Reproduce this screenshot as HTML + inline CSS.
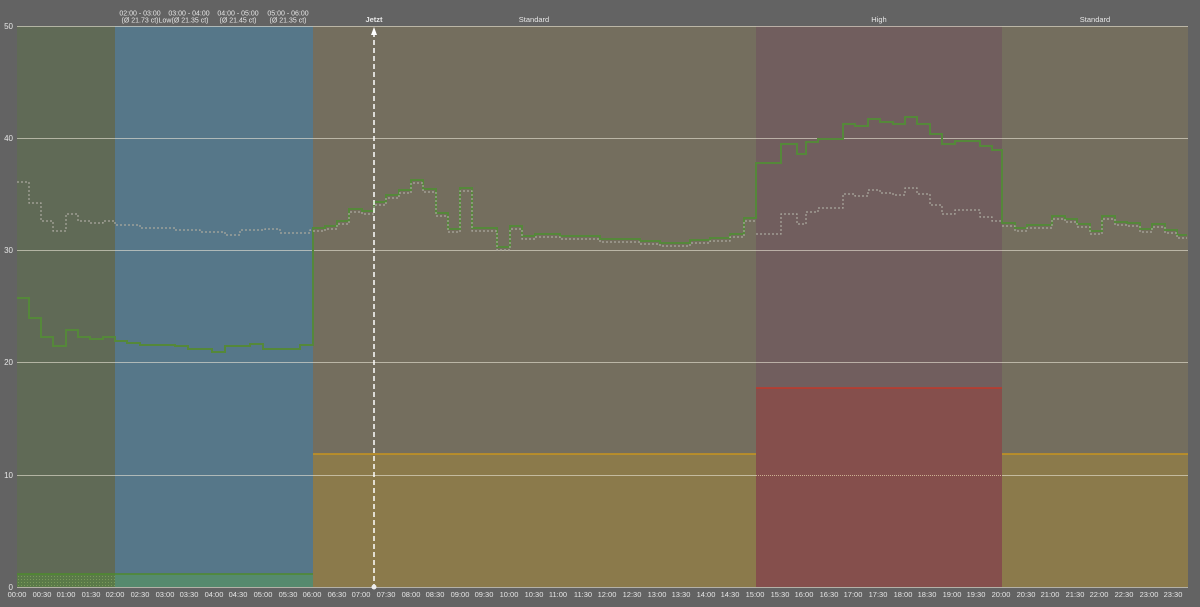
<!DOCTYPE html>
<html><head><meta charset="utf-8"><style>
html,body{margin:0;padding:0;background:#636363;width:1200px;height:607px;overflow:hidden}
svg{display:block;font-family:"Liberation Sans",sans-serif}
</style></head><body>
<svg width="1200" height="607" viewBox="0 0 1200 607">
<defs>
<clipPath id="c1"><rect x="313" y="0" width="443" height="607"/><rect x="1002" y="0" width="186" height="607"/></clipPath>
<pattern id="dots" width="3" height="3" patternUnits="userSpaceOnUse"><rect width="3" height="3" fill="#5a7a48"/><rect width="1" height="1" fill="#7a9a5a"/></pattern>
</defs>
<rect x="17" y="26" width="98" height="561" fill="#606a56"/>
<rect x="115" y="26" width="198" height="561" fill="#567789"/>
<rect x="313" y="26" width="443" height="561" fill="#746e5e"/>
<rect x="756" y="26" width="246" height="561" fill="#715e5e"/>
<rect x="1002" y="26" width="186" height="561" fill="#746e5e"/>
<rect x="17" y="574" width="98" height="13" fill="url(#dots)"/>
<rect x="115" y="574" width="198" height="13" fill="#568a6e"/>
<line x1="17" y1="574" x2="313" y2="574" stroke="#4e8a2e" stroke-width="1.5"/>
<rect x="313" y="454" width="443" height="133" fill="#8b7a4b"/>
<rect x="1002" y="454" width="186" height="133" fill="#8b7a4b"/>
<line x1="313" y1="454" x2="756" y2="454" stroke="#c8941e" stroke-width="1.5"/>
<line x1="1002" y1="454" x2="1188" y2="454" stroke="#c8941e" stroke-width="1.5"/>
<rect x="756" y="388" width="246" height="199" fill="#854f4c"/>
<line x1="756" y1="388" x2="1002" y2="388" stroke="#c0392b" stroke-width="1.5"/>
<g stroke="rgba(235,230,215,0.6)" stroke-width="1">
<line x1="17" y1="26.5" x2="1188" y2="26.5"/><line x1="17" y1="138.5" x2="1188" y2="138.5"/>
<line x1="17" y1="250.5" x2="1188" y2="250.5"/><line x1="17" y1="362.5" x2="1188" y2="362.5"/>
<line x1="17" y1="475.5" x2="756" y2="475.5"/><line x1="1002" y1="475.5" x2="1188" y2="475.5"/>
<line x1="17" y1="587.5" x2="1188" y2="587.5"/>
</g>
<line x1="756" y1="475.5" x2="1002" y2="475.5" stroke="rgba(235,220,180,0.7)" stroke-dasharray="1,1"/>
<path d="M17 298 H29 V318 H41 V337 H53 V346 H66 V330 H78 V337 H90 V339 H103 V337 H115 V341 H127 V343 H140 V345 H175 V346 H188 V349 H212 V352 H225 V346 H250 V344 H263 V349 H300 V345 H313 V228 H325 V226 H337 V221 H349 V209 H362 V211 H374 V202 H386 V195 H399 V190 H411 V180 H423 V189 H436 V213 H448 V229 H460 V188 H472 V228 H497 V247 H510 V226 H522 V236 H535 V234 H560 V236 H600 V239 H640 V241 H660 V243 H690 V240 H710 V238 H730 V234 H744 V218 H756 V163 H781 V144 H797 V154 H806 V142 H818 V139 H843 V124 H855 V126 H868 V119 H880 V122 H893 V124 H905 V117 H917 V124 H930 V134 H942 V144 H955 V141 H980 V146 H992 V150 H1002 V223 H1015 V228 H1027 V225 H1052 V216 H1065 V219 H1077 V224 H1090 V231 H1102 V216 H1115 V222 H1127 V223 H1140 V229 H1152 V224 H1165 V230 H1177 V235 H1187" fill="none" stroke="#55883a" stroke-width="2"/>
<g clip-path="url(#c1)"><path transform="translate(0,3)" d="M313 228 H325 V226 H337 V221 H349 V209 H362 V211 H374 V202 H386 V195 H399 V190 H411 V180 H423 V189 H436 V213 H448 V229 H460 V188 H472 V228 H497 V247 H510 V226 H522 V236 H535 V234 H560 V236 H600 V239 H640 V241 H660 V243 H690 V240 H710 V238 H730 V234 H744 V218 H756 M1002 223 H1015 V228 H1027 V225 H1052 V216 H1065 V219 H1077 V224 H1090 V231 H1102 V216 H1115 V222 H1127 V223 H1140 V229 H1152 V224 H1165 V230 H1177 V235 H1187" fill="none" stroke="#aaa89e" stroke-width="1.2" stroke-dasharray="2,2"/></g>
<path d="M17 182 H29 V203 H41 V221 H53 V231 H66 V214 H78 V221 H90 V223 H103 V221 H115 V225 H140 V228 H175 V230 H200 V232 H225 V235 H240 V230 H265 V229 H280 V233 H310 V230 H313 M756 234 H781 V214 H797 V224 H806 V212 H818 V208 H843 V194 H855 V196 H868 V190 H880 V193 H893 V195 H905 V188 H917 V194 H930 V205 H942 V214 H955 V210 H980 V217 H992 V221 H1002" fill="none" stroke="#aaa89e" stroke-width="1.2" stroke-dasharray="2,2"/>
<line x1="374" y1="32" x2="374" y2="587" stroke="#fff" stroke-width="1.5" stroke-dasharray="5,3"/>
<path d="M371 35 L374 27 L377 35 Z" fill="#fff"/>
<circle cx="374" cy="587" r="2.5" fill="#eee"/>
<g fill="#e6e6e6" font-size="8">
<text x="13" y="29" text-anchor="end">50</text><text x="13" y="141" text-anchor="end">40</text>
<text x="13" y="253" text-anchor="end">30</text><text x="13" y="365" text-anchor="end">20</text>
<text x="13" y="478" text-anchor="end">10</text><text x="13" y="590" text-anchor="end">0</text>
<g text-anchor="middle" font-size="7">
<text x="140" y="15.5">02:00 - 03:00</text><text x="140" y="22.5">(Ø 21.73 ct)</text>
<text x="165" y="22.5">Low</text>
<text x="189" y="15.5">03:00 - 04:00</text><text x="190" y="22.5">(Ø 21.35 ct)</text>
<text x="238" y="15.5">04:00 - 05:00</text><text x="238" y="22.5">(Ø 21.45 ct)</text>
<text x="288" y="15.5">05:00 - 06:00</text><text x="288" y="22.5">(Ø 21.35 ct)</text>
</g>
<g text-anchor="middle">
<text x="374" y="22" font-weight="bold" font-size="7.5">Jetzt</text>
<text x="534" y="22" font-size="7.5">Standard</text><text x="879" y="22" font-size="7.5">High</text><text x="1095" y="22" font-size="7.5">Standard</text>
</g>
<g text-anchor="middle" font-size="7.5">
<text x="17" y="597">00:00</text><text x="42" y="597">00:30</text><text x="66" y="597">01:00</text><text x="91" y="597">01:30</text>
<text x="115" y="597">02:00</text><text x="140" y="597">02:30</text><text x="165" y="597">03:00</text><text x="189" y="597">03:30</text>
<text x="214" y="597">04:00</text><text x="238" y="597">04:30</text><text x="263" y="597">05:00</text><text x="288" y="597">05:30</text>
<text x="312" y="597">06:00</text><text x="337" y="597">06:30</text><text x="361" y="597">07:00</text><text x="386" y="597">07:30</text>
<text x="411" y="597">08:00</text><text x="435" y="597">08:30</text><text x="460" y="597">09:00</text><text x="484" y="597">09:30</text>
<text x="509" y="597">10:00</text><text x="534" y="597">10:30</text><text x="558" y="597">11:00</text><text x="583" y="597">11:30</text>
<text x="607" y="597">12:00</text><text x="632" y="597">12:30</text><text x="657" y="597">13:00</text><text x="681" y="597">13:30</text>
<text x="706" y="597">14:00</text><text x="730" y="597">14:30</text><text x="755" y="597">15:00</text><text x="780" y="597">15:30</text>
<text x="804" y="597">16:00</text><text x="829" y="597">16:30</text><text x="853" y="597">17:00</text><text x="878" y="597">17:30</text>
<text x="903" y="597">18:00</text><text x="927" y="597">18:30</text><text x="952" y="597">19:00</text><text x="976" y="597">19:30</text>
<text x="1001" y="597">20:00</text><text x="1026" y="597">20:30</text><text x="1050" y="597">21:00</text><text x="1075" y="597">21:30</text>
<text x="1099" y="597">22:00</text><text x="1124" y="597">22:30</text><text x="1149" y="597">23:00</text><text x="1173" y="597">23:30</text>
</g>
</g>
</svg>
</body></html>
